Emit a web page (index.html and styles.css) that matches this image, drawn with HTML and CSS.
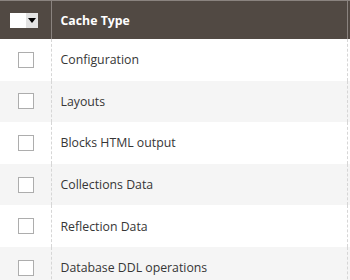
FILE: index.html
```html
<!DOCTYPE html>
<html lang="en">
<head>
  <meta charset="UTF-8">
  <title>Cache Management</title>
  <link rel="stylesheet" href="styles.css">
</head>
<body>
  <table class="data-grid">
    <thead>
      <tr>
        <th class="col-select">
          <!-- Mass select control -->
          <div class="mass-select">
            <span class="mass-check"></span>
            <span class="mass-toggle"><span class="arrow"></span></span>
          </div>
        </th>
        <th class="col-type">Cache Type</th>
        <th class="col-more"></th>
      </tr>
    </thead>
    <tbody>
      <tr>
        <td class="col-select"><span class="checkbox"></span></td>
        <td class="col-type">Configuration</td>
        <td class="col-more"></td>
      </tr>
      <tr>
        <td class="col-select"><span class="checkbox"></span></td>
        <td class="col-type">Layouts</td>
        <td class="col-more"></td>
      </tr>
      <tr>
        <td class="col-select"><span class="checkbox"></span></td>
        <td class="col-type">Blocks HTML output</td>
        <td class="col-more"></td>
      </tr>
      <tr>
        <td class="col-select"><span class="checkbox"></span></td>
        <td class="col-type">Collections Data</td>
        <td class="col-more"></td>
      </tr>
      <tr>
        <td class="col-select"><span class="checkbox"></span></td>
        <td class="col-type">Reflection Data</td>
        <td class="col-more"></td>
      </tr>
      <tr>
        <td class="col-select"><span class="checkbox"></span></td>
        <td class="col-type">Database DDL operations</td>
        <td class="col-more"></td>
      </tr>
    </tbody>
  </table>
</body>
</html>
```

FILE: styles.css
```css
:root {
  --header-bg: #514943;
  --header-line: #8a837f;
  --row-alt: #f5f5f5;
  --text-dark: #363636;
  --cell-line: #d6d6d6;
  --check-border: #adadad;
}

body {
  margin: 0;
  padding: 0;
  overflow: hidden;
  background: #ffffff;
  font-family: 'Open Sans', 'DejaVu Sans', sans-serif;
}

.data-grid {
  border-collapse: collapse;
  width: 350px;
  table-layout: fixed;
}

.data-grid th {
  background-color: var(--header-bg);
  color: #ffffff;
  font-size: 12.3px;
  font-weight: 700;
  text-align: left;
  height: 38px;
  padding: 0 9px;
  border-top: 1px solid var(--header-line);
  border-left: 1px solid var(--header-line);
}

.data-grid th:first-child {
  border-left: none;
}

.data-grid td {
  font-size: 12.3px;
  color: var(--text-dark);
  height: 41.6px;
  padding: 0 9px;
  box-sizing: border-box;
  border-left: 1px dashed var(--cell-line);
}

.data-grid td:first-child {
  border-left: none;
}

.data-grid tbody tr:nth-child(even) td {
  background-color: var(--row-alt);
}

.col-select {
  width: 51px;
  box-sizing: border-box;
}

.data-grid .col-select,
.data-grid .col-more {
  padding: 0;
}

.col-type {
  width: 296px;
  box-sizing: border-box;
}

/* Header mass select */
.mass-select {
  display: flex;
  margin-left: 10px;
  width: 28px;
  height: 15px;
}

.mass-check {
  width: 16px;
  height: 15px;
  background: #ffffff;
}

.mass-toggle {
  width: 12px;
  height: 15px;
  background: #e3e3e3;
  display: flex;
  align-items: center;
  justify-content: center;
}

.arrow {
  width: 0;
  height: 0;
  border-left: 4px solid transparent;
  border-right: 4px solid transparent;
  border-top: 5px solid #000000;
  margin-top: 1px;
}

/* Row checkbox */
.checkbox {
  display: block;
  width: 16px;
  height: 16px;
  box-sizing: border-box;
  margin-left: 18px;
  border: 1px solid var(--check-border);
  background: #ffffff;
}
```
